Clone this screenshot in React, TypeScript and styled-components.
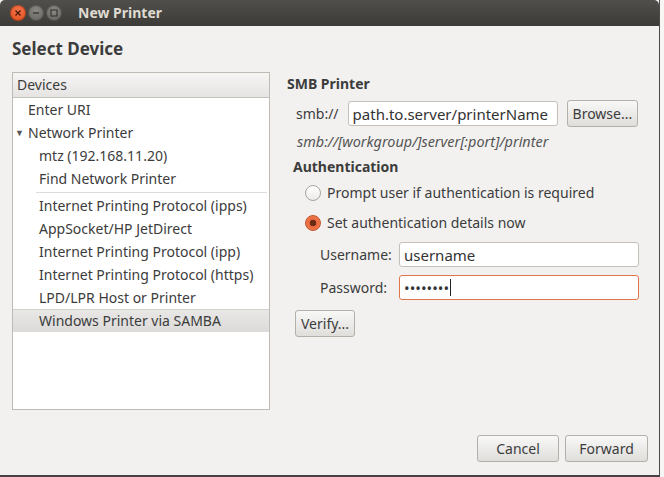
import styled, { createGlobalStyle } from 'styled-components';

const GlobalStyle = createGlobalStyle`
	html, body {
		margin: 0;
		padding: 0;
		background: #f4f4f2;
	}

	body {
		font-family: 'Noto Sans', 'Open Sans', sans-serif;
		font-size: 14px;
		line-height: 18px;
		color: #3c3c3c;
	}
`;

const Screen = styled.div`
	display: flex;
	width: 664px;
	height: 477px;
	overflow: hidden;
`;

const Window = styled.div`
	display: flex;
	flex-direction: column;
	width: 659px;
	height: 475px;
	background: #f2f1f0;
	border-right: 1px solid #4a4945;
	border-bottom: 2px solid #4a3f48;
	flex-shrink: 0;
`;

const TitleBar = styled.div`
	display: flex;
	align-items: center;
	height: 26px;
	padding-left: 10px;
	background: linear-gradient(#504f4b, #3c3b37);
	border-radius: 5px 5px 0 0;
	flex-shrink: 0;
`;

const WinButton = styled.span<{ $close?: boolean }>`
	display: flex;
	align-items: center;
	justify-content: center;
	width: 16px;
	height: 16px;
	margin-right: 2px;
	border-radius: 50%;
	background: ${(p) => (p.$close ? 'radial-gradient(circle at 50% 35%, #f5744a, #df4b18)' : 'radial-gradient(circle at 50% 35%, #8a8984, #5f5e5a)')};
	box-shadow: inset 0 0 0 1px rgba(0, 0, 0, 0.25);
`;

const WindowTitle = styled.span`
	margin-left: 14px;
	font-weight: bold;
	font-size: 14px;
	color: #dfdbd2;
`;

const Body = styled.div`
	display: flex;
	flex-direction: column;
	flex: 1;
	padding: 12px 12px 12px 12px;
`;

const PageTitle = styled.h1`
	margin: 0 0 12px 0;
	font-size: 17px;
	font-weight: bold;
	line-height: 22px;
	color: #3c3c3c;
`;

const Columns = styled.div`
	display: flex;
	gap: 17px;
	flex: 1;
`;

const DevicePanel = styled.div`
	display: flex;
	flex-direction: column;
	width: 256px;
	height: 336px;
	background: #fff;
	border: 1px solid #bebab4;
`;

const PanelHeader = styled.div`
	height: 24px;
	line-height: 24px;
	padding-left: 4px;
	background: linear-gradient(#f6f5f4, #e5e4e2);
	border-bottom: 1px solid #c4c1bc;
`;

const DeviceList = styled.ul`
	list-style: none;
	margin: 0;
	padding: 0;
`;

const DeviceRow = styled.li<{ $level: number; $selected?: boolean }>`
	display: flex;
	align-items: center;
	height: 23px;
	padding-left: ${(p) => (p.$level === 0 ? 15 : 26)}px;
	white-space: nowrap;
	background: ${(p) => (p.$selected ? 'linear-gradient(#e9e8e6, #dcdbd9)' : 'transparent')};
	box-shadow: ${(p) => (p.$selected ? 'inset 0 1px 0 #d3d1ce' : 'none')};
`;

const Expander = styled.span`
	width: 13px;
	margin-left: -13px;
	font-size: 9px;
	color: #555;
`;

const Separator = styled.li`
	height: 1px;
	margin: 2px 2px 1px 23px;
	background: #dedcd9;
`;

const Settings = styled.div`
	display: flex;
	flex-direction: column;
	flex: 1;
	padding-top: 3px;
`;

const SectionTitle = styled.div<{ $indent?: number }>`
	font-weight: bold;
	line-height: 18px;
	padding-left: ${(p) => p.$indent ?? 0}px;
`;

const Row = styled.div<{ $indent?: number; $gap?: number }>`
	display: flex;
	align-items: center;
	gap: ${(p) => p.$gap ?? 8}px;
	padding-left: ${(p) => p.$indent ?? 0}px;
`;

const TextInput = styled.div<{ $width: number; $focused?: boolean }>`
	display: flex;
	align-items: center;
	width: ${(p) => p.$width}px;
	height: 25px;
	padding-left: 4px;
	box-sizing: border-box;
	background: #fff;
	border: 1px solid ${(p) => (p.$focused ? '#e0774c' : '#c3bfb9')};
	border-radius: 3px;
	color: #333;
	font-size: 15px;
`;

const Caret = styled.span`
	width: 1px;
	height: 17px;
	margin-left: 1px;
	background: #222;
`;

const Button = styled.button<{ $width?: number }>`
	height: 27px;
	width: ${(p) => (p.$width ? `${p.$width}px` : 'auto')};
	padding: 0 5px;
	font-family: inherit;
	font-size: 14px;
	color: #3c3c3c;
	background: linear-gradient(#f8f8f7, #dfdedb);
	border: 1px solid #b3b0aa;
	border-radius: 3px;
`;

const Hint = styled.div`
	padding-left: 10px;
	font-style: italic;
	font-size: 14.4px;
	color: #555;
	line-height: 18px;
`;

const Radio = styled.span<{ $checked?: boolean }>`
	width: 14px;
	height: 14px;
	border-radius: 50%;
	border: 1px solid ${(p) => (p.$checked ? '#c2532a' : '#a8a5a0')};
	background: ${(p) => (p.$checked ? 'radial-gradient(circle, #6b2a16 0 3px, #e8683a 3.5px, #f2845a)' : 'linear-gradient(#fff, #ebeae8)')};
	flex-shrink: 0;
`;

const FieldLabel = styled.span`
	width: 71px;
`;

const Footer = styled.div`
	display: flex;
	justify-content: flex-end;
	gap: 6px;
	margin-right: -1px;
	margin-bottom: 1px;
`;

const OuterStrip = styled.div`
	flex: 1;
	background: #f6f6f4;
`;

const devices = [
	{ label: 'Internet Printing Protocol (ipps)' },
	{ label: 'AppSocket/HP JetDirect' },
	{ label: 'Internet Printing Protocol (ipp)' },
	{ label: 'Internet Printing Protocol (https)' },
	{ label: 'LPD/LPR Host or Printer' },
	{ label: 'Windows Printer via SAMBA', selected: true },
];

const App = () => {
	return (
		<Screen>
			<GlobalStyle />
			<Window>
				<TitleBar>
					<WinButton $close>
						<svg width="8" height="8" viewBox="0 0 8 8">
							<path d="M1.5 1.5 L6.5 6.5 M6.5 1.5 L1.5 6.5" stroke="#4a1a08" strokeWidth="1.4" />
						</svg>
					</WinButton>
					<WinButton>
						<svg width="8" height="8" viewBox="0 0 8 8">
							<path d="M1 4 H7" stroke="#3a3935" strokeWidth="1.4" />
						</svg>
					</WinButton>
					<WinButton>
						<svg width="8" height="8" viewBox="0 0 8 8">
							<rect x="1" y="1" width="6" height="6" fill="none" stroke="#3a3935" strokeWidth="1.2" />
						</svg>
					</WinButton>
					<WindowTitle>New Printer</WindowTitle>
				</TitleBar>
				<Body>
					<PageTitle>Select Device</PageTitle>
					<Columns>
						<DevicePanel>
							<PanelHeader>Devices</PanelHeader>
							<DeviceList>
								<DeviceRow $level={0}>Enter URI</DeviceRow>
								<DeviceRow $level={0}>
									<Expander>▼</Expander>
									Network Printer
								</DeviceRow>
								<DeviceRow $level={1}>mtz (192.168.11.20)</DeviceRow>
								<DeviceRow $level={1}>Find Network Printer</DeviceRow>
								<Separator />
								{devices.map((d) => (
									<DeviceRow key={d.label} $level={1} $selected={d.selected}>
										{d.label}
									</DeviceRow>
								))}
							</DeviceList>
						</DevicePanel>
						<Settings>
							<SectionTitle>SMB Printer</SectionTitle>
							<Row $indent={9} $gap={9} style={{ marginTop: 7 }}>
								<span>smb://</span>
								<TextInput $width={210}>path.to.server/printerName</TextInput>
								<Button>Browse...</Button>
							</Row>
							<Hint style={{ marginTop: 6 }}>smb://[workgroup/]server[:port]/printer</Hint>
							<SectionTitle $indent={6} style={{ marginTop: 7 }}>Authentication</SectionTitle>
							<Row $indent={18} $gap={6} style={{ marginTop: 8 }}>
								<Radio />
								<span>Prompt user if authentication is required</span>
							</Row>
							<Row $indent={18} $gap={6} style={{ marginTop: 12 }}>
								<Radio $checked />
								<span>Set authentication details now</span>
							</Row>
							<Row $indent={33} style={{ marginTop: 10 }}>
								<FieldLabel>Username:</FieldLabel>
								<TextInput $width={240}>username</TextInput>
							</Row>
							<Row $indent={33} style={{ marginTop: 8 }}>
								<FieldLabel>Password:</FieldLabel>
								<TextInput $width={240} $focused>
									••••••••
									<Caret />
								</TextInput>
							</Row>
							<Row $indent={8} style={{ marginTop: 10 }}>
								<Button>Verify...</Button>
							</Row>
						</Settings>
					</Columns>
					<Footer>
						<Button $width={82}>Cancel</Button>
						<Button $width={83}>Forward</Button>
					</Footer>
				</Body>
			</Window>
			<OuterStrip />
		</Screen>
	);
};

export default App;
